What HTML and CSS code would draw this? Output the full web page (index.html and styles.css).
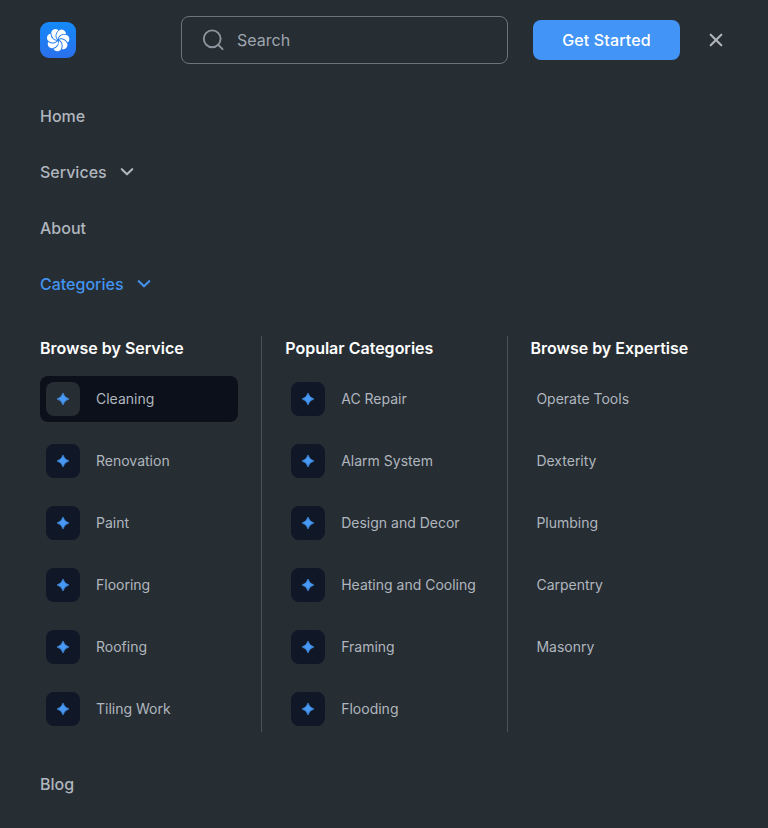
FILE: index.html
```html
<!DOCTYPE html>
<html lang="en">
<head>
<meta charset="utf-8">
<title>Services</title>
<link rel="stylesheet" href="styles.css">
</head>
<body>
<svg class="sprite" aria-hidden="true">
  <symbol id="spark" viewBox="0 0 14 14"><path d="M7 1.1Q8.2 5.8 12.9 7Q8.2 8.2 7 12.9Q5.8 8.2 1.1 7Q5.8 5.8 7 1.1Z" fill="currentColor" stroke="currentColor" stroke-width=".7" stroke-linejoin="round"/></symbol>
  <symbol id="chevron" viewBox="0 0 14 8"><path d="M1.8 1.2L7 6.3L12.2 1.2" fill="none" stroke="currentColor" stroke-width="2.1" stroke-linecap="round" stroke-linejoin="round"/></symbol>
</svg>
<header class="header">
  <a class="logo" href="#">
    <svg width="36" height="36" viewBox="0 0 36 36">
      <defs>
        <linearGradient id="bg" x1="0" y1="0" x2="0" y2="1"><stop offset="0" stop-color="#1489f8"/><stop offset="1" stop-color="#2a70ec"/></linearGradient>
      </defs>
      <rect width="36" height="36" rx="9" fill="url(#bg)"/>
      <g transform="translate(18 18)">
        <g fill="#fff" transform="rotate(31)">
          <circle r="8"/>
          <circle id="petal" cy="-7" r="4.4"/>
          <use href="#petal" transform="rotate(51.43)"/><use href="#petal" transform="rotate(102.86)"/><use href="#petal" transform="rotate(154.29)"/><use href="#petal" transform="rotate(205.71)"/><use href="#petal" transform="rotate(257.14)"/><use href="#petal" transform="rotate(308.57)"/>
        </g>
        <g fill="none" stroke="#1f7bf2" stroke-width=".95">
          <path id="vein" d="M0 0C-2.8 -2.2 -2.9 -6.6 .9 -9.8"/>
          <use href="#vein" transform="rotate(51.43)"/><use href="#vein" transform="rotate(102.86)"/><use href="#vein" transform="rotate(154.29)"/><use href="#vein" transform="rotate(205.71)"/><use href="#vein" transform="rotate(257.14)"/><use href="#vein" transform="rotate(308.57)"/>
        </g>
      </g>
    </svg>
  </a>
  <label class="search">
    <svg width="22" height="22" viewBox="0 0 22 22" fill="none" stroke="currentColor" stroke-width="1.9" stroke-linecap="round"><circle cx="10.2" cy="9.8" r="8.4"/><path d="M16.4 16L20.6 20.2"/></svg>
    <span>Search</span>
  </label>
  <a class="button" href="#">Get Started</a>
  <button class="close" type="button" aria-label="Close"><svg width="14" height="14" viewBox="0 0 14 14" fill="none" stroke="currentColor" stroke-width="2.1" stroke-linecap="round"><path d="M1.7 1.7L12.3 12.3M12.3 1.7L1.7 12.3"/></svg></button>
</header>
<nav class="nav">
  <a class="nav-item" href="#">Home</a>
  <a class="nav-item" href="#">Services<svg class="chevron"><use href="#chevron"/></svg></a>
  <a class="nav-item" href="#">About</a>
  <a class="nav-item nav-item--open" href="#">Categories<svg class="chevron"><use href="#chevron"/></svg></a>
  <div class="mega">
    <section class="column">
      <h2>Browse by Service</h2>
      <ul>
        <li class="active"><i><svg><use href="#spark"/></svg></i>Cleaning</li>
        <li><i><svg><use href="#spark"/></svg></i>Renovation</li>
        <li><i><svg><use href="#spark"/></svg></i>Paint</li>
        <li><i><svg><use href="#spark"/></svg></i>Flooring</li>
        <li><i><svg><use href="#spark"/></svg></i>Roofing</li>
        <li><i><svg><use href="#spark"/></svg></i>Tiling Work</li>
      </ul>
    </section>
    <div class="divider"></div>
    <section class="column">
      <h2>Popular Categories</h2>
      <ul>
        <li><i><svg><use href="#spark"/></svg></i>AC Repair</li>
        <li><i><svg><use href="#spark"/></svg></i>Alarm System</li>
        <li><i><svg><use href="#spark"/></svg></i>Design and Decor</li>
        <li><i><svg><use href="#spark"/></svg></i>Heating and Cooling</li>
        <li><i><svg><use href="#spark"/></svg></i>Framing</li>
        <li><i><svg><use href="#spark"/></svg></i>Flooding</li>
      </ul>
    </section>
    <div class="divider"></div>
    <section class="column">
      <h2>Browse by Expertise</h2>
      <ul>
        <li>Operate Tools</li>
        <li>Dexterity</li>
        <li>Plumbing</li>
        <li>Carpentry</li>
        <li>Masonry</li>
      </ul>
    </section>
  </div>
  <a class="nav-item" href="#">Blog</a>
</nav>
</body>
</html>
```
FILE: styles.css
```css
* { box-sizing: border-box; margin: 0; padding: 0; }
body {
  min-height: 828px;
  padding: 16px 40px;
  background: #262d33;
  color: #b0b6be;
  font: 500 16px/24px Inter, sans-serif;
}
a { color: inherit; text-decoration: none; }
svg { display: block; flex: none; }
.sprite { position: absolute; width: 0; height: 0; }
.header { display: flex; align-items: center; height: 48px; margin-bottom: 24px; }
.logo { width: 36px; margin-right: 105px; }
.search {
  display: flex;
  align-items: center;
  gap: 13px;
  width: 327px;
  height: 48px;
  padding: 0 20px;
  border: 1px solid #6b737b;
  border-radius: 8px;
  color: #8d959e;
  font-weight: 400;
}
.search span { color: #9fa6af; }
.button {
  width: 147px;
  height: 40px;
  margin-left: 25px;
  border-radius: 8px;
  background: #4294f7;
  color: #fff;
  letter-spacing: .15px;
  line-height: 40px;
  text-align: center;
}
.close { margin-left: 29px; border: 0; background: none; color: #b0b6be; }
.nav-item { display: flex; align-items: center; gap: 13px; height: 56px; }
.nav-item--open { color: #4294f0; }
.chevron { width: 14px; height: 8px; }
.mega { display: flex; gap: 23.8px; padding: 24px 0; }
.column { flex: 1 1 0; min-width: 0; }
.divider { width: 1px; margin-right: -1px; background: #4a5158; }
h2 { margin-bottom: 16px; color: #fff; font-size: 16px; font-weight: 600; line-height: 24px; white-space: nowrap; }
ul { display: flex; flex-direction: column; gap: 16px; list-style: none; }
li {
  display: flex;
  align-items: center;
  gap: 16px;
  height: 46px;
  padding: 0 6px;
  border-radius: 8px;
  font-size: 14px;
  font-weight: 400;
  white-space: nowrap;
}
li i {
  display: grid;
  place-items: center;
  width: 34px;
  height: 34px;
  border-radius: 8px;
  background: #101726;
  color: #4799f5;
}
li svg { width: 14px; height: 14px; }
.active { background: #0b101a; }
.active i { background: #262d33; }
```
